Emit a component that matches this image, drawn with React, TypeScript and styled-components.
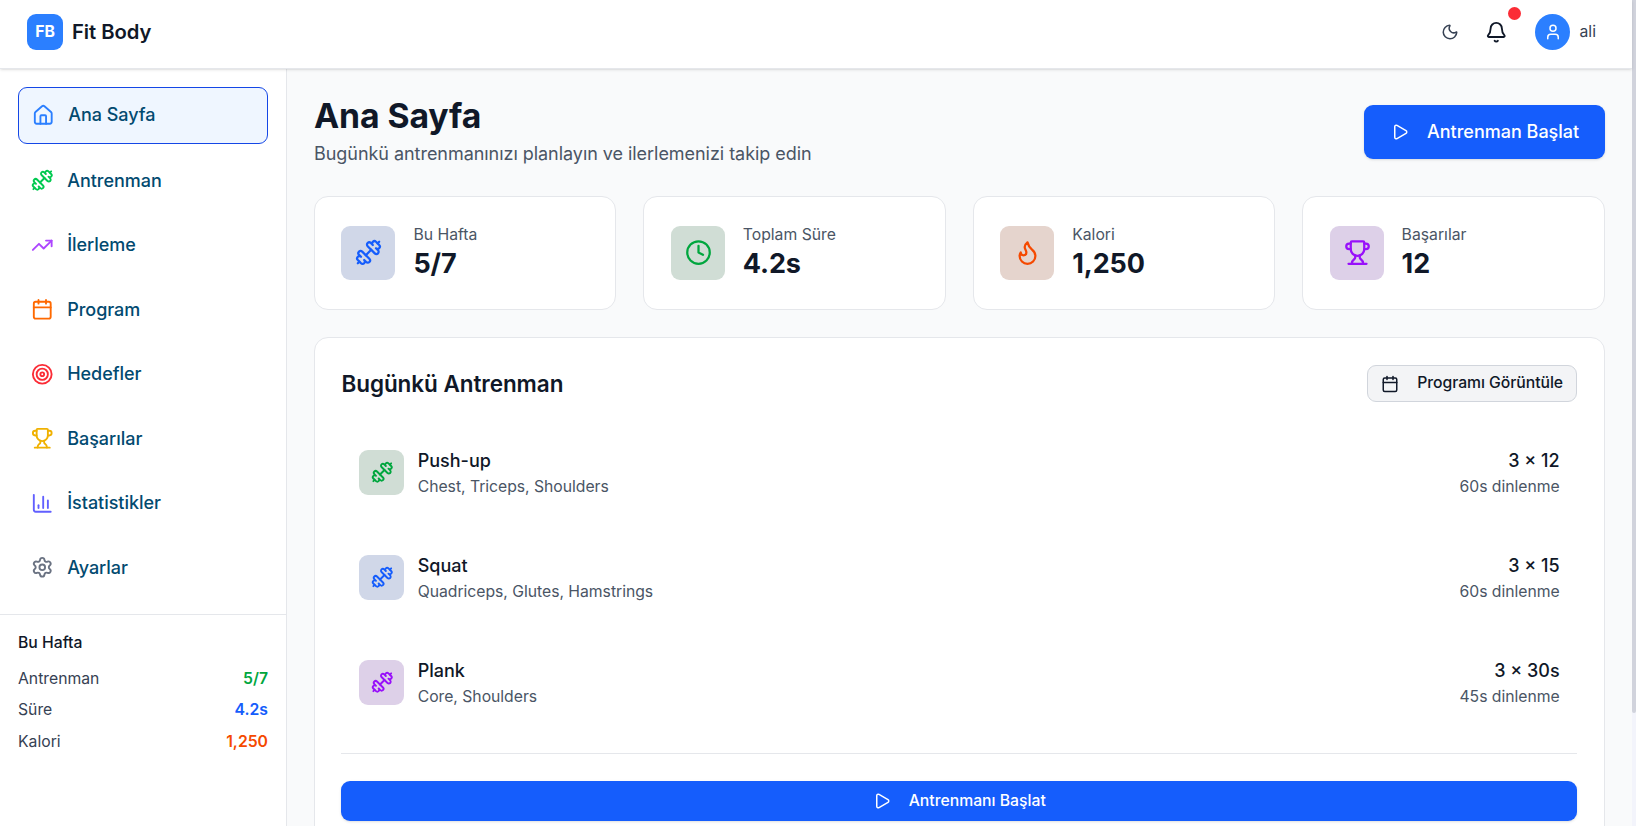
import React from "react";
import styled, { createGlobalStyle, css } from "styled-components";
import {
  Bell,
  Calendar,
  ChartColumn,
  Clock,
  Dumbbell,
  Flame,
  House,
  Moon,
  Play,
  Settings,
  Target,
  TrendingUp,
  Trophy,
  User,
} from "lucide-react";

const GlobalStyle = createGlobalStyle`
  *, *::before, *::after { box-sizing: border-box; }
  html { font-size: 18px; }
  body {
    margin: 0;
    font-family: Inter, "Liberation Sans", sans-serif;
    line-height: 1.5;
    color: #101828;
    background: #f9fafb;
    overflow: hidden;
  }
  h1, h2, h3, p { margin: 0; font-size: inherit; font-weight: inherit; }
  button { font-family: inherit; cursor: pointer; }
  svg { display: block; flex-shrink: 0; }
`;

const Shell = styled.div`
  display: grid;
  grid-template-columns: minmax(0, 1fr) 4px;
  height: 826px;
  overflow: hidden;
`;

const Page = styled.div`
  display: flex;
  flex-direction: column;
  min-width: 0;
  height: 826px;
`;

const ScrollTrack = styled.div`
  background: #f3f4fb;
`;

const ScrollThumb = styled.div`
  height: 713px;
  background: #d1d3dc;
  border-radius: 0 0 4px 4px;
`;

const Header = styled.header`
  position: relative;
  z-index: 1;
  display: flex;
  justify-content: space-between;
  align-items: center;
  flex-shrink: 0;
  height: 69px;
  padding: 0 36px 4px 27px;
  background: #fff;
  border-bottom: 1px solid #e5e7eb;
  box-shadow: 0 1px 3px rgba(0, 0, 0, 0.1), 0 1px 2px -1px rgba(0, 0, 0, 0.1);
`;

const Brand = styled.div`
  display: flex;
  align-items: center;
  gap: 9px;
`;

const BrandName = styled.span`
  padding-top: 1px;
  font-size: 20.25px;
  font-weight: 600;
  letter-spacing: -0.08px;
`;

const Logo = styled.span`
  display: grid;
  place-items: center;
  width: 36px;
  height: 36px;
  border-radius: 9px;
  background: #2b7fff;
  color: #fff;
  font-size: 15.75px;
  font-weight: 700;
`;

const HeaderActions = styled.div`
  display: flex;
  align-items: center;
  font-size: 15.75px;
  color: #364153;
`;

const BellButton = styled.span`
  position: relative;
  margin: 0 27.5px 0 26px;
  color: #101828;
`;

const Dot = styled.span`
  position: absolute;
  top: -14px;
  right: -14px;
  width: 13.5px;
  height: 13.5px;
  border-radius: 50%;
  background: #fb2c36;
`;

const Avatar = styled.span`
  display: grid;
  place-items: center;
  width: 35px;
  height: 36px;
  margin-right: 10px;
  padding-left: 1px;
  border-radius: 50%;
  background: #2b7fff;
  color: #fff;
`;

const Body = styled.div`
  display: flex;
  flex: 1;
  min-height: 0;
`;

const Sidebar = styled.aside`
  display: flex;
  flex-direction: column;
  flex-shrink: 0;
  width: 287px;
  background: #fff;
  border-right: 1px solid #e5e7eb;
`;

const Nav = styled.nav`
  display: flex;
  flex-direction: column;
  gap: 9px;
  padding: 18px 18px 18.5px;
`;

const NavItem = styled.a<{ $active?: boolean }>`
  display: flex;
  align-items: center;
  gap: 13.7px;
  height: 55.5px;
  padding: 0 13px;
  border-radius: 9px;
  font-size: 18px;
  font-weight: 500;
  letter-spacing: -0.03px;
  color: #024a70;
  ${(p) =>
    p.$active &&
    css`
      height: 56.6px;
      padding-bottom: 1px;
      border: 1px solid #1447e6;
      background: #eff6ff;
    `}
`;

const Week = styled.section`
  padding: 18.4px 18px;
  border-top: 1px solid #e5e7eb;
  font-size: 15.75px;
`;

const WeekTitle = styled.h3`
  margin-bottom: 15px;
  line-height: 20px;
  font-weight: 500;
`;

const WeekRow = styled.div`
  display: flex;
  justify-content: space-between;
  height: 22.5px;
  margin-bottom: 9px;
  line-height: 22.5px;
  color: #364153;
`;

const WeekValue = styled.span<{ $color: string }>`
  font-weight: 600;
  color: ${(p) => p.$color};
`;

const Main = styled.main`
  flex: 1;
  min-width: 0;
  padding: 26px 27.4px 0 27px;
  overflow: hidden;
`;

const TitleBar = styled.div`
  display: flex;
  justify-content: space-between;
  align-items: center;
  height: 73px;
  margin-bottom: 28px;
`;

const Title = styled.h1`
  font-size: 33.75px;
  line-height: 40.5px;
  font-weight: 700;
  letter-spacing: -0.1px;
`;

const Subtitle = styled.p`
  margin-top: 4px;
  font-size: 18px;
  line-height: 27px;
  letter-spacing: -0.045px;
  color: #4a5565;
`;

const PrimaryButton = styled.button<{ $wide?: boolean }>`
  display: flex;
  align-items: center;
  justify-content: center;
  gap: 18px;
  width: ${(p) => (p.$wide ? "100%" : "241px")};
  height: ${(p) => (p.$wide ? 40 : 54)}px;
  padding: ${(p) => (p.$wide ? "0 0 1px" : "0 0 0 2px")};
  border: 0;
  border-radius: 9px;
  background: #155dfc;
  color: #fff;
  font-size: ${(p) => (p.$wide ? 15.75 : 18)}px;
  font-weight: 500;
  box-shadow: 0 1px 3px rgba(0, 0, 0, 0.1), 0 1px 2px -1px rgba(0, 0, 0, 0.1);
`;

const Stats = styled.div`
  display: grid;
  grid-template-columns: repeat(4, 1fr);
  gap: 27px;
  margin-bottom: 27px;
`;

const Card = styled.section`
  border: 1px solid #e5e7eb;
  border-radius: 14px;
  background: #fff;
`;

const StatCard = styled(Card)`
  display: flex;
  align-items: center;
  gap: 18px;
  height: 114px;
  padding: 0 26.4px;
`;

const IconTile = styled.span<{ $size: number; $bg: string; $color: string }>`
  display: grid;
  place-items: center;
  flex-shrink: 0;
  width: ${(p) => p.$size}px;
  height: ${(p) => p.$size}px;
  padding: 0 0 1px 1px;
  border-radius: 9px;
  background: ${(p) => p.$bg};
  color: ${(p) => p.$color};
`;

const StatLabel = styled.p`
  font-size: 15.75px;
  line-height: 22.5px;
  color: #4a5565;
`;

const StatValue = styled.p`
  font-size: 27px;
  line-height: 36px;
  font-weight: 700;
  letter-spacing: -0.1px;
`;

const Workout = styled(Card)`
  height: 640px;
  padding: 27px 26.6px 27px 26.4px;
`;

const WorkoutHead = styled.div`
  display: flex;
  justify-content: space-between;
  align-items: center;
  height: 37px;
  margin-bottom: 24.5px;
`;

const WorkoutTitle = styled.h2`
  font-size: 22.5px;
  line-height: 31.5px;
  font-weight: 600;
  letter-spacing: -0.06px;
`;

const OutlineButton = styled.button`
  display: flex;
  align-items: center;
  gap: 18px;
  height: 37px;
  padding: 0 13px;
  border: 1px solid #d1d5dc;
  border-radius: 9px;
  background: #f3f4f6;
  color: #101828;
  font-size: 15.75px;
  font-weight: 500;
  letter-spacing: -0.05px;
`;

const ButtonLabel = styled.span`
  padding-bottom: 2px;
`;

const ExerciseList = styled.div`
  display: flex;
  flex-direction: column;
  gap: 13px;
`;

const Exercise = styled.div`
  display: flex;
  align-items: center;
  gap: 13.5px;
  height: 92px;
  padding: 0 17.4px 0 17.8px;
`;

const ExerciseText = styled.div<{ $right?: boolean }>`
  ${(p) => p.$right && "margin-left: auto; text-align: right;"}
`;

const ExerciseName = styled.p`
  font-size: 18px;
  line-height: 27px;
  font-weight: 500;
`;

const ExerciseMeta = styled.p`
  margin-top: 2px;
  font-size: 15.75px;
  line-height: 22.5px;
  letter-spacing: -0.03px;
  color: #4a5565;
`;

const WorkoutFoot = styled.div`
  margin-top: 24.5px;
  padding-top: 27px;
  border-top: 1px solid #e5e7eb;
`;

const navItems = [
  { label: "Ana Sayfa", icon: House, color: "#2b7fff", active: true },
  { label: "Antrenman", icon: Dumbbell, color: "#00c950" },
  { label: "İlerleme", icon: TrendingUp, color: "#ad46ff" },
  { label: "Program", icon: Calendar, color: "#ff6900" },
  { label: "Hedefler", icon: Target, color: "#fb2c36" },
  { label: "Başarılar", icon: Trophy, color: "#f0b100" },
  { label: "İstatistikler", icon: ChartColumn, color: "#615fff" },
  { label: "Ayarlar", icon: Settings, color: "#6a7282" },
];

const week = [
  { label: "Antrenman", value: "5/7", color: "#00a63e" },
  { label: "Süre", value: "4.2s", color: "#155dfc" },
  { label: "Kalori", value: "1,250", color: "#f54900" },
];

const blue = { bg: "#d0d7e8", color: "#155dfc" };
const green = { bg: "#d0ddd5", color: "#00a63e" };
const orange = { bg: "#e5d4cd", color: "#f54900" };
const purple = { bg: "#ddd0e8", color: "#9810fa" };

const stats = [
  { label: "Bu Hafta", value: "5/7", icon: Dumbbell, tone: blue },
  { label: "Toplam Süre", value: "4.2s", icon: Clock, tone: green },
  { label: "Kalori", value: "1,250", icon: Flame, tone: orange },
  { label: "Başarılar", value: "12", icon: Trophy, tone: purple },
];

const exercises = [
  { name: "Push-up", muscles: "Chest, Triceps, Shoulders", sets: "3 × 12", rest: "60s dinlenme", tone: green },
  { name: "Squat", muscles: "Quadriceps, Glutes, Hamstrings", sets: "3 × 15", rest: "60s dinlenme", tone: blue },
  { name: "Plank", muscles: "Core, Shoulders", sets: "3 × 30s", rest: "45s dinlenme", tone: purple },
];

export default function App() {
  return (
    <Shell>
      <GlobalStyle />
      <Page>
        <Header>
          <Brand>
            <Logo>FB</Logo>
            <BrandName>Fit Body</BrandName>
          </Brand>
          <HeaderActions>
            <Moon size={18} />
            <BellButton>
              <Bell size={22.5} />
              <Dot />
            </BellButton>
            <Avatar>
              <User size={18} />
            </Avatar>
            ali
          </HeaderActions>
        </Header>
        <Body>
          <Sidebar>
            <Nav>
              {navItems.map(({ label, icon: Icon, color, active }) => (
                <NavItem key={label} $active={active}>
                  <Icon size={22.5} color={color} />
                  {label}
                </NavItem>
              ))}
            </Nav>
            <Week>
              <WeekTitle>Bu Hafta</WeekTitle>
              {week.map((w) => (
                <WeekRow key={w.label}>
                  {w.label}
                  <WeekValue $color={w.color}>{w.value}</WeekValue>
                </WeekRow>
              ))}
            </Week>
          </Sidebar>
          <Main>
            <TitleBar>
              <div>
                <Title>Ana Sayfa</Title>
                <Subtitle>Bugünkü antrenmanınızı planlayın ve ilerlemenizi takip edin</Subtitle>
              </div>
              <PrimaryButton>
                <Play size={18} />
                Antrenman Başlat
              </PrimaryButton>
            </TitleBar>
            <Stats>
              {stats.map(({ label, value, icon: Icon, tone }) => (
                <StatCard key={label}>
                  <IconTile $size={54} $bg={tone.bg} $color={tone.color}>
                    <Icon size={27} />
                  </IconTile>
                  <div>
                    <StatLabel>{label}</StatLabel>
                    <StatValue>{value}</StatValue>
                  </div>
                </StatCard>
              ))}
            </Stats>
            <Workout>
              <WorkoutHead>
                <WorkoutTitle>Bugünkü Antrenman</WorkoutTitle>
                <OutlineButton>
                  <Calendar size={18} />
                  <ButtonLabel>Programı Görüntüle</ButtonLabel>
                </OutlineButton>
              </WorkoutHead>
              <ExerciseList>
                {exercises.map((e) => (
                  <Exercise key={e.name}>
                    <IconTile $size={45} $bg={e.tone.bg} $color={e.tone.color}>
                      <Dumbbell size={22.5} />
                    </IconTile>
                    <ExerciseText>
                      <ExerciseName>{e.name}</ExerciseName>
                      <ExerciseMeta>{e.muscles}</ExerciseMeta>
                    </ExerciseText>
                    <ExerciseText $right>
                      <ExerciseName>{e.sets}</ExerciseName>
                      <ExerciseMeta>{e.rest}</ExerciseMeta>
                    </ExerciseText>
                  </Exercise>
                ))}
              </ExerciseList>
              <WorkoutFoot>
                <PrimaryButton $wide>
                  <Play size={18} />
                  Antrenmanı Başlat
                </PrimaryButton>
              </WorkoutFoot>
            </Workout>
          </Main>
        </Body>
      </Page>
      <ScrollTrack>
        <ScrollThumb />
      </ScrollTrack>
    </Shell>
  );
}
